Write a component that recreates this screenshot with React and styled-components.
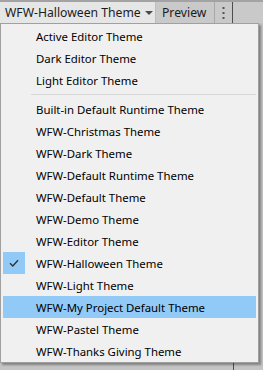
import React, { useState } from 'react';
import styled, { createGlobalStyle } from 'styled-components';

const GlobalStyle = createGlobalStyle`
  html, body {
    margin: 0;
    padding: 0;
    background: #c4c4c4;
  }
`;

const Window = styled.div`
  position: relative;
  width: 263px;
  height: 370px;
  overflow: hidden;
  background: #c4c4c4;
  font-family: "Noto Sans", "Open Sans", sans-serif;
`;

const Toolbar = styled.div`
  display: flex;
  height: 21px;
  border-top: 2px solid #a3a3a3;
  background: #c9c9c9;
`;

const ThemeButton = styled.div`
  width: 156px;
  display: flex;
  align-items: center;
  gap: 4px;
  padding-left: 5px;
  box-sizing: border-box;
  background: #e6e6e6;
  border-right: 1px solid #bdbdbd;
  font-size: 12.2px;
  white-space: nowrap;
  color: #1b1b1b;
  cursor: pointer;
`;

const Caret = styled.span`
  width: 0;
  height: 0;
  border-left: 4px solid transparent;
  border-right: 4px solid transparent;
  border-top: 4px solid #4a4a4a;
  margin-top: 1px;
`;

const PreviewTab = styled.div`
  width: 59px;
  display: flex;
  align-items: center;
  padding-left: 6px;
  box-sizing: border-box;
  border-right: 1px solid #a8a8a8;
  font-size: 12.2px;
  color: #1b1b1b;
`;

const MoreButton = styled.div`
  width: 17px;
  display: flex;
  align-items: center;
  justify-content: center;
  border-right: 1px solid #4e4e4e;
`;

const Body = styled.div`
  display: flex;
  height: 347px;
`;

const Pane = styled.div`
  width: 233px;
  border-right: 1px solid #4e4e4e;
`;

const Menu = styled.div`
  position: absolute;
  top: 23px;
  left: 0;
  width: 259px;
  box-sizing: border-box;
  padding: 1px 2px 0;
  background: #f0f0f0;
  border: 1px solid #a0a0a0;
  box-shadow: 2px 2px 2px rgba(0, 0, 0, 0.35);
`;

const Item = styled.div`
  position: relative;
  height: 22px;
  display: flex;
  align-items: center;
  padding-left: 33px;
  font-size: 11.4px;
  white-space: nowrap;
  color: #000;
  background: ${p => (p.$active ? '#91c9f7' : 'transparent')};
  cursor: default;
`;

const Check = styled.span`
  position: absolute;
  left: 0;
  top: 0;
  width: 22px;
  height: 22px;
  display: flex;
  align-items: center;
  justify-content: center;
  background: #91c9f7;
`;

const Separator = styled.div`
  height: 1px;
  margin: 3px 0 3px 28px;
  background: #d7d7d7;
`;

const editorThemes = ['Active Editor Theme', 'Dark Editor Theme', 'Light Editor Theme'];

const runtimeThemes = [
  'Built-in Default Runtime Theme',
  'WFW-Christmas Theme',
  'WFW-Dark Theme',
  'WFW-Default Runtime Theme',
  'WFW-Default Theme',
  'WFW-Demo Theme',
  'WFW-Editor Theme',
  'WFW-Halloween Theme',
  'WFW-Light Theme',
  'WFW-My Project Default Theme',
  'WFW-Pastel Theme',
  'WFW-Thanks Giving Theme',
];

export default function App() {
  const [selected, setSelected] = useState('WFW-Halloween Theme');
  const hovered = 'WFW-My Project Default Theme';

  return (
    <Window>
      <GlobalStyle />
      <Toolbar>
        <ThemeButton>
          {selected}
          <Caret />
        </ThemeButton>
        <PreviewTab>Preview</PreviewTab>
        <MoreButton>
          <svg width="3" height="12" viewBox="0 0 3 12">
            <rect x="0.5" y="0" width="2" height="2" fill="#555" />
            <rect x="0.5" y="5" width="2" height="2" fill="#555" />
            <rect x="0.5" y="10" width="2" height="2" fill="#555" />
          </svg>
        </MoreButton>
      </Toolbar>
      <Body>
        <Pane />
      </Body>

      <Menu>
        {editorThemes.map(name => (
          <Item key={name}>{name}</Item>
        ))}
        <Separator />
        {runtimeThemes.map(name => (
          <Item key={name} $active={name === hovered} onClick={() => setSelected(name)}>
            {name === selected && (
              <Check>
                <svg width="10" height="8" viewBox="0 0 10 8">
                  <path d="M1 4.2 L3.8 7 L9 1.2" fill="none" stroke="#333" strokeWidth="1.4" />
                </svg>
              </Check>
            )}
            {name}
          </Item>
        ))}
      </Menu>
    </Window>
  );
}
